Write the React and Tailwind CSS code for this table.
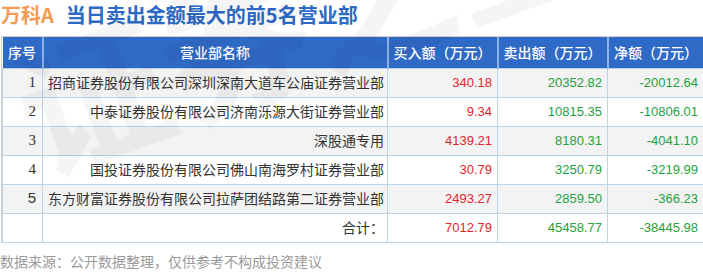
import React from "react";

const rows = [
  ["1", "招商证券股份有限公司深圳深南大道车公庙证券营业部", "340.18", "20352.82", "-20012.64"],
  ["2", "中泰证券股份有限公司济南泺源大街证券营业部", "9.34", "10815.35", "-10806.01"],
  ["3", "深股通专用", "4139.21", "8180.31", "-4041.10"],
  ["4", "国投证券股份有限公司佛山南海罗村证券营业部", "30.79", "3250.79", "-3219.99"],
  ["5", "东方财富证券股份有限公司拉萨团结路第二证券营业部", "2493.27", "2859.50", "-366.23"],
];

const cjk = { fontFamily: '"Microsoft YaHei", "Noto Sans CJK SC", "Noto Sans", sans-serif' };
const num = { fontFamily: '"Liberation Sans", Tahoma, sans-serif' };

export default function App() {
  return (
    <div className="relative w-[703px] h-[274px] bg-white overflow-hidden" style={cjk}>
      <div className="flex items-center h-[28px] pl-[1px] pt-[1px] font-bold text-[20px] leading-none">
        <span className="text-[#f39b55]">万科A</span>
        <span className="ml-[12px] text-[#2c6ac6]">当日卖出金额最大的前5名营业部</span>
      </div>
      <div className="h-[8px]" />
      <div className="ml-[1px] w-[702px] border-t border-l border-[#cfcfcf]">
        <table className="border-collapse table-fixed w-[701px]">
          <colgroup>
            <col className="w-[40px]" />
            <col className="w-[345px]" />
            <col className="w-[110px]" />
            <col className="w-[110px]" />
            <col className="w-[96px]" />
          </colgroup>
          <thead>
            <tr className="h-[31px] bg-[#306ac7] text-white text-[14px] font-medium">
              <th className="border-r-2 border-[#8fb2e6] text-center font-medium">序号</th>
              <th className="border-r-2 border-[#8fb2e6] text-center font-medium">营业部名称</th>
              <th className="border-r-2 border-[#8fb2e6] text-center font-medium">买入额（万元）</th>
              <th className="border-r-2 border-[#8fb2e6] text-center font-medium">卖出额（万元）</th>
              <th className="text-center font-medium">净额（万元）</th>
            </tr>
          </thead>
          <tbody>
            {rows.map((r, i) => (
              <tr key={i} className={`h-[29px] ${i % 2 === 0 ? "bg-[#f3f3f3]" : "bg-white"}`}>
                <td className="border border-[#bcd3ea] text-right pr-[6px] text-[15px] text-[#333]" style={{ fontFamily: i < 4 ? '"Liberation Serif", serif' : '"Liberation Sans", sans-serif' }}>{r[0]}</td>
                <td className="border border-[#bcd3ea] text-right pr-[3px] text-[14px] text-[#333] whitespace-nowrap">{r[1]}</td>
                <td className="border border-[#bcd3ea] text-right pr-[5px] text-[13px] text-[#e3262c]" style={num}>{r[2]}</td>
                <td className="border border-[#bcd3ea] text-right pr-[5px] text-[13px] text-[#23a23d]" style={num}>{r[3]}</td>
                <td className="border border-[#bcd3ea] text-right pr-[5px] text-[13px] text-[#23a23d]" style={num}>{r[4]}</td>
              </tr>
            ))}
            <tr className="h-[29px] bg-white">
              <td className="border border-[#bcd3ea]"></td>
              <td className="border border-[#bcd3ea] text-right pr-[3px] text-[14px] text-[#333]">合计：</td>
              <td className="border border-[#bcd3ea] text-right pr-[5px] text-[13px] text-[#e3262c]" style={num}>7012.79</td>
              <td className="border border-[#bcd3ea] text-right pr-[5px] text-[13px] text-[#23a23d]" style={num}>45458.77</td>
              <td className="border border-[#bcd3ea] text-right pr-[5px] text-[13px] text-[#23a23d]" style={num}>-38445.98</td>
            </tr>
          </tbody>
        </table>
      </div>
      <div className="mt-[8px] pl-[0px] text-[14px] text-[#9a9a9a] leading-[20px]">数据来源：公开数据整理，仅供参考不构成投资建议</div>
      <div className="pointer-events-none absolute left-[20px] top-[40px] -rotate-[20deg] origin-left text-[150px] font-bold leading-none text-black opacity-[0.035] whitespace-nowrap">
        证券之星
      </div>
    </div>
  );
}
